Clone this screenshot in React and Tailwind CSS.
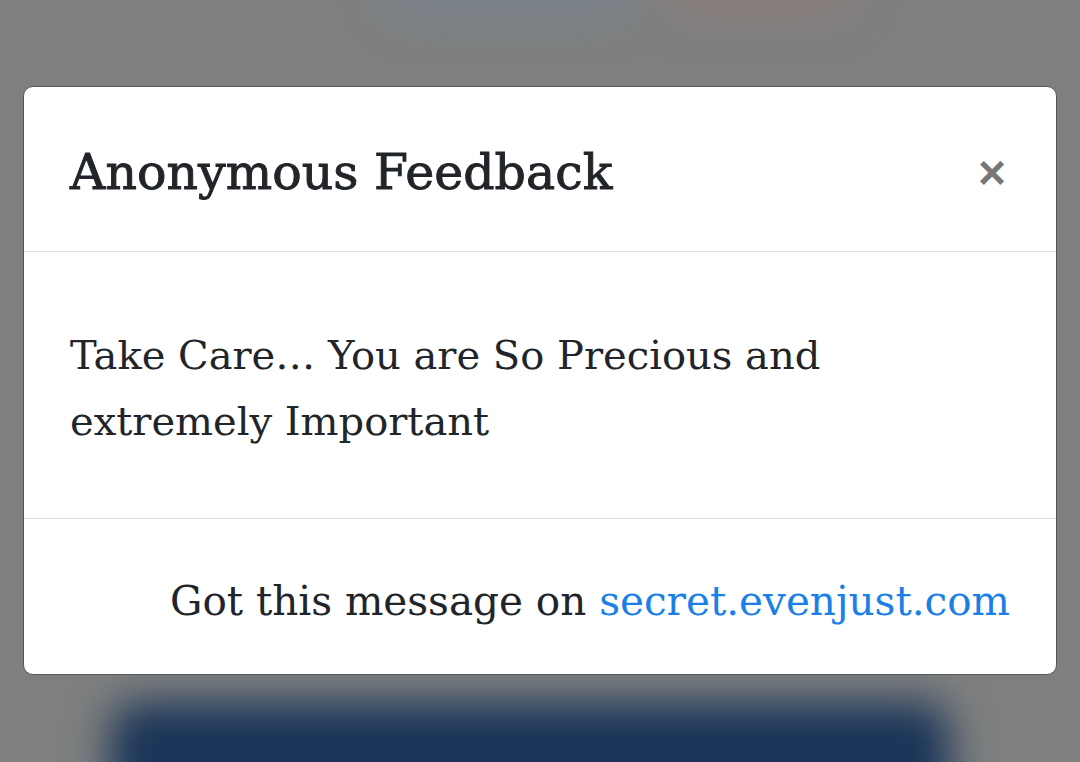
export default function App() {
  return (
    <div className="relative w-[1080px] h-[762px] overflow-hidden bg-[#7e7f7f] font-['DejaVu_Serif',serif] text-[#212529]">
      <div className="absolute left-[110px] top-[702px] w-[840px] h-[140px] rounded-[30px] bg-[#1a3558] blur-[20px]" />
      <div className="absolute left-[380px] top-[-40px] w-[260px] h-[60px] rounded-full bg-[#7a8590] blur-[20px] opacity-70" />
      <div className="absolute left-[660px] top-[-40px] w-[200px] h-[60px] rounded-full bg-[#8e7e7c] blur-[20px] opacity-70" />
      <div className="relative pt-[86px] px-[23px]">
        <div className="bg-white border border-[#555759] rounded-[10px] overflow-hidden">
          <div className="h-[165px] flex items-center justify-between pt-[7px] pl-[46px] pr-[50px] border-b border-[#dee2e6]">
            <h1 className="text-[49px] font-normal [-webkit-text-stroke:0.9px_#212529] whitespace-nowrap">Anonymous Feedback</h1>
            <span className="text-[48px] font-bold text-[#777777] leading-none font-['Liberation_Sans',sans-serif]">×</span>
          </div>
          <div className="h-[267px] flex items-center pt-[6px] px-[46px] border-b border-[#dee2e6]">
            <p className="text-[40px] leading-[66px] w-[800px]">Take Care… You are So Precious and extremely Important</p>
          </div>
          <div className="h-[155px] flex items-center justify-end pt-[9px] pr-[46px]">
            <p className="text-[40.5px] whitespace-nowrap">Got this message on <span className="text-[#1a7fe6]">secret.evenjust.com</span></p>
          </div>
        </div>
      </div>
    </div>
  );
}
